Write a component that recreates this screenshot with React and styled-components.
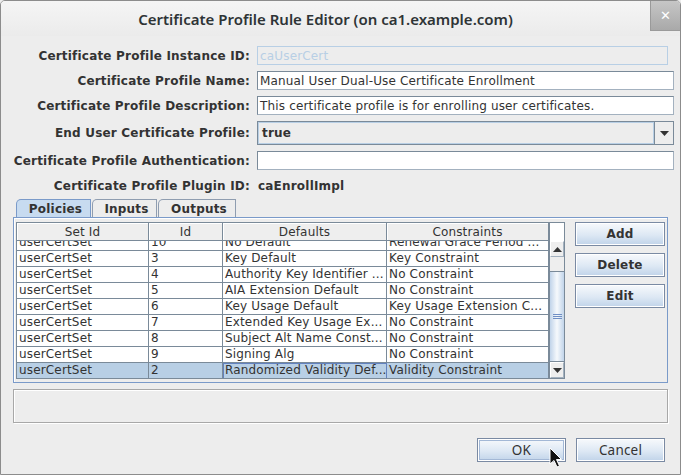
import React from 'react';
import styled, { createGlobalStyle } from 'styled-components';

const GlobalStyle = createGlobalStyle`
  html, body {
    margin: 0;
    padding: 0;
    background: #ededed;
  }
  * {
    box-sizing: border-box;
  }
`;

const Window = styled.div`
  position: relative;
  width: 681px;
  height: 475px;
  border: 1px solid #8c8c8c;
  border-radius: 5px 5px 0 0;
  background: #ededed;
  font-family: 'DejaVu Sans', sans-serif;
  font-size: 12px;
  letter-spacing: 0.16px;
  color: #333333;
  display: flex;
  flex-direction: column;
  overflow: hidden;
`;

const TitleBar = styled.div`
  height: 35px;
  flex: none;
  display: flex;
  align-items: flex-start;
  background: linear-gradient(#f5f5f5, #ebebeb);
`;

const Title = styled.div`
  flex: 1;
  height: 35px;
  display: flex;
  align-items: center;
  justify-content: center;
  font-family: 'Noto Sans', sans-serif;
  font-weight: 600;
  font-size: 15px;
  letter-spacing: 0;
  color: #2e3436;
`;

const CloseButton = styled.div`
  width: 30px;
  height: 30px;
  display: flex;
  align-items: center;
  justify-content: center;
  background: linear-gradient(#c6c6c6, #a9a9a9);
  border-left: 1px solid #9a9a9a;
  border-bottom: 1px solid #9a9a9a;
  color: #ffffff;
  font-family: 'DejaVu Sans', sans-serif;
  font-weight: bold;
  font-size: 13px;
`;

const Body = styled.div`
  flex: 1;
  display: flex;
  flex-direction: column;
  padding: 10px 6px 0 12px;
`;

const Form = styled.div`
  display: grid;
  grid-template-columns: 237px 1fr;
  column-gap: 7px;
  row-gap: 6px;
  align-items: center;
`;

const Label = styled.div`
  font-weight: bold;
  letter-spacing: 0.2px;
  text-align: right;
  white-space: nowrap;
`;

const TextField = styled.div`
  height: 19px;
  padding: 0 2px;
  display: flex;
  align-items: center;
  white-space: nowrap;
  overflow: hidden;
  background: ${(p) => (p.disabled ? '#ededed' : '#ffffff')};
  border: 1px solid ${(p) => (p.disabled ? '#b8cfe5' : '#7a8a99')};
  border-right-color: ${(p) => (p.disabled ? '#b8cfe5' : '#a3b1bf')};
  border-bottom-color: ${(p) => (p.disabled ? '#b8cfe5' : '#a3b1bf')};
  color: ${(p) => (p.disabled ? '#b8cfe5' : '#333333')};
  margin-right: ${(p) => (p.disabled ? '6px' : '0')};
`;

const Combo = styled.div`
  height: 24px;
  display: flex;
  border: 1px solid #7a8a99;
  background: #ededed;
  box-shadow: inset 1px 1px 0 #ffffff;
`;

const ComboValue = styled.div`
  flex: 1;
  display: flex;
  align-items: center;
  padding-left: 3px;
  font-weight: bold;
  border: 1px solid #b8cfe5;
`;

const ComboArrow = styled.div`
  width: 19px;
  display: flex;
  align-items: center;
  justify-content: center;
  border-left: 1px solid #7a8a99;
  background: #ededed;
`;

const Value = styled.div`
  height: 19px;
  display: flex;
  align-items: center;
  font-weight: bold;
  letter-spacing: 0.2px;
  padding-left: 1px;
`;

const TabArea = styled.div`
  margin-top: 4px;
  margin-right: 6px;
  display: flex;
  flex-direction: column;
`;

const TabStrip = styled.div`
  display: flex;
  padding-left: 3px;
  height: 18px;
`;

const Tab = styled.div`
  width: ${(p) => p.w}px;
  height: 18px;
  display: flex;
  align-items: center;
  justify-content: center;
  font-weight: bold;
  letter-spacing: 0.2px;
  border: 1px solid ${(p) => (p.active ? '#7a9ac9' : '#8f9db0')};
  border-bottom: none;
  border-top-left-radius: 5px;
  background: ${(p) => (p.active ? '#c7dbf0' : '#ededed')};
  padding-left: 4px;
  margin-right: 1px;
`;

const TabPanel = styled.div`
  height: 166px;
  border: 1px solid #7a9ac9;
  box-shadow: inset 1px 1px 0 #ffffff;
  display: flex;
  padding: 4px 2px 4px 2px;
  gap: 10px;
`;

const ScrollPane = styled.div`
  width: 549px;
  height: 157px;
  display: flex;
  border: 1px solid #7a8a99;
  background: #ffffff;
`;

const Table = styled.div`
  width: 532px;
  display: flex;
  flex-direction: column;
`;

const Cols = '132px 74px 164px 162px';

const HeaderRow = styled.div`
  display: grid;
  grid-template-columns: ${Cols};
  height: 18px;
  flex: none;
  background: #eeeeee;
  border-bottom: 1px solid #7a8a99;
`;

const HeaderCell = styled.div`
  display: flex;
  align-items: center;
  justify-content: center;
  border-right: 1px solid #7a8a99;
  box-shadow: inset 1px 1px 0 #ffffff;
`;

const Viewport = styled.div`
  flex: 1;
  overflow: hidden;
`;

const Rows = styled.div`
  margin-top: -6px;
`;

const Row = styled.div`
  display: grid;
  grid-template-columns: ${Cols};
  height: 16px;
  background: ${(p) => (p.selected ? '#b8cfe5' : '#ffffff')};
`;

const Cell = styled.div`
  height: 16px;
  padding-left: 2px;
  line-height: 15px;
  white-space: nowrap;
  overflow: hidden;
  border-right: 1px solid #7a8a99;
  border-bottom: 1px solid #7a8a99;
  outline: ${(p) => (p.focus ? '1px solid #6382bf' : 'none')};
  outline-offset: -1px;
`;

const ScrollBar = styled.div`
  width: 15px;
  display: flex;
  flex-direction: column;
  border-left: 1px solid #7a8a99;
`;

const Corner = styled.div`
  height: 19px;
  background: #ffffff;
`;

const Track = styled.div`
  flex: 1;
  display: flex;
  flex-direction: column;
  background: #eeeeee;
`;

const ArrowButton = styled.div`
  height: 16px;
  display: flex;
  align-items: center;
  justify-content: center;
  background: #eeeeee;
  border: 1px solid #ffffff;
  border-right-color: #a3b1bf;
  border-bottom-color: #a3b1bf;
  margin-top: ${(p) => (p.down ? 'auto' : '0')};
`;

const Gap = styled.div`
  height: 15px;
  border-bottom: 1px solid #7a8a99;
`;

const Thumb = styled.div`
  height: 90px;
  display: flex;
  align-items: center;
  justify-content: center;
  background: linear-gradient(90deg, #c1d4ea, #f6f9fc 50%, #c1d4ea);
  border-bottom: 1px solid #7a8a99;
`;

const Grip = styled.div`
  width: 9px;
  height: 5px;
  border-top: 1px solid #6f8fc5;
  border-bottom: 1px solid #6f8fc5;
  position: relative;
  &::after {
    content: '';
    position: absolute;
    left: 0;
    right: 0;
    top: 1px;
    border-top: 1px solid #6f8fc5;
  }
`;

const SideButtons = styled.div`
  display: flex;
  flex-direction: column;
  gap: 7px;
`;

const Button = styled.button`
  width: ${(p) => p.w || 90}px;
  height: 24px;
  padding: 0;
  border: 1px solid #7a8aa3;
  background: linear-gradient(#f7f9fc, #dde8f4 55%, #c0d3e9);
  font-family: ${(p) => (p.plain ? "'Noto Sans', sans-serif" : "'DejaVu Sans', sans-serif")};
  font-weight: ${(p) => (p.plain ? 'normal' : 'bold')};
  font-size: ${(p) => (p.plain ? '13.5px' : '12px')};
  letter-spacing: 0.2px;
  color: #333333;
  box-shadow: ${(p) => (p.focused ? 'inset 0 0 0 1px #ffffff, inset 0 0 0 2px #a3b8d6' : 'inset 0 0 0 1px #ffffff')};
`;

const StatusBox = styled.div`
  margin-top: 6px;
  margin-right: 6px;
  height: 34px;
  border: 1px solid #a8a8a8;
  box-shadow: inset 1px 1px 0 #ffffff, 1px 1px 0 #ffffff;
`;

const Footer = styled.div`
  display: flex;
  justify-content: flex-end;
  gap: 10px;
  margin-top: 15px;
  margin-right: 9px;
`;

const Cursor = styled.svg`
  position: absolute;
  left: 548px;
  top: 446px;
`;

const rows = [
  ['userCertSet', '10', 'No Default', 'Renewal Grace Period ...'],
  ['userCertSet', '3', 'Key Default', 'Key Constraint'],
  ['userCertSet', '4', 'Authority Key Identifier ...', 'No Constraint'],
  ['userCertSet', '5', 'AIA Extension Default', 'No Constraint'],
  ['userCertSet', '6', 'Key Usage Default', 'Key Usage Extension C...'],
  ['userCertSet', '7', 'Extended Key Usage Ex...', 'No Constraint'],
  ['userCertSet', '8', 'Subject Alt Name Const...', 'No Constraint'],
  ['userCertSet', '9', 'Signing Alg', 'No Constraint'],
  ['userCertSet', '2', 'Randomized Validity Def...', 'Validity Constraint'],
];

function Triangle({ up }) {
  return (
    <svg width="9" height="5" viewBox="0 0 9 5">
      <path d={up ? 'M0 5 L4.5 0 L9 5 Z' : 'M0 0 L9 0 L4.5 5 Z'} fill="#333333" />
    </svg>
  );
}

export default function App() {
  return (
    <>
      <GlobalStyle />
      <Window>
        <TitleBar>
          <Title>Certificate Profile Rule Editor (on ca1.example.com)</Title>
          <CloseButton>✕</CloseButton>
        </TitleBar>
        <Body>
          <Form>
            <Label>Certificate Profile Instance ID:</Label>
            <TextField disabled>caUserCert</TextField>
            <Label>Certificate Profile Name:</Label>
            <TextField>Manual User Dual-Use Certificate Enrollment</TextField>
            <Label>Certificate Profile Description:</Label>
            <TextField>This certificate profile is for enrolling user certificates.</TextField>
            <Label>End User Certificate Profile:</Label>
            <Combo>
              <ComboValue>true</ComboValue>
              <ComboArrow>
                <Triangle />
              </ComboArrow>
            </Combo>
            <Label>Certificate Profile Authentication:</Label>
            <TextField />
            <Label>Certificate Profile Plugin ID:</Label>
            <Value>caEnrollImpl</Value>
          </Form>

          <TabArea>
            <TabStrip>
              <Tab active w={75}>Policies</Tab>
              <Tab w={65}>Inputs</Tab>
              <Tab w={78}>Outputs</Tab>
            </TabStrip>
            <TabPanel>
              <ScrollPane>
                <Table>
                  <HeaderRow>
                    <HeaderCell>Set Id</HeaderCell>
                    <HeaderCell>Id</HeaderCell>
                    <HeaderCell>Defaults</HeaderCell>
                    <HeaderCell>Constraints</HeaderCell>
                  </HeaderRow>
                  <Viewport>
                    <Rows>
                      {rows.map((r, i) => (
                        <Row key={i} selected={i === rows.length - 1}>
                          {r.map((c, j) => (
                            <Cell key={j} focus={i === rows.length - 1 && j === 2}>
                              {c}
                            </Cell>
                          ))}
                        </Row>
                      ))}
                    </Rows>
                  </Viewport>
                </Table>
                <ScrollBar>
                  <Corner />
                  <Track>
                    <ArrowButton>
                      <Triangle up />
                    </ArrowButton>
                    <Gap />
                    <Thumb>
                      <Grip />
                    </Thumb>
                    <ArrowButton down>
                      <Triangle />
                    </ArrowButton>
                  </Track>
                </ScrollBar>
              </ScrollPane>
              <SideButtons>
                <Button>Add</Button>
                <Button>Delete</Button>
                <Button>Edit</Button>
              </SideButtons>
            </TabPanel>
          </TabArea>

          <StatusBox />

          <Footer>
            <Button plain focused w={89}>OK</Button>
            <Button plain w={89}>Cancel</Button>
          </Footer>
        </Body>
        <Cursor width="14" height="22" viewBox="0 0 14 22">
          <path
            d="M1 1 L1 17 L5 13.5 L8 20 L10.5 19 L7.5 12.5 L12.5 12.5 Z"
            fill="#111111"
            stroke="#ffffff"
            strokeWidth="1"
          />
        </Cursor>
      </Window>
    </>
  );
}
